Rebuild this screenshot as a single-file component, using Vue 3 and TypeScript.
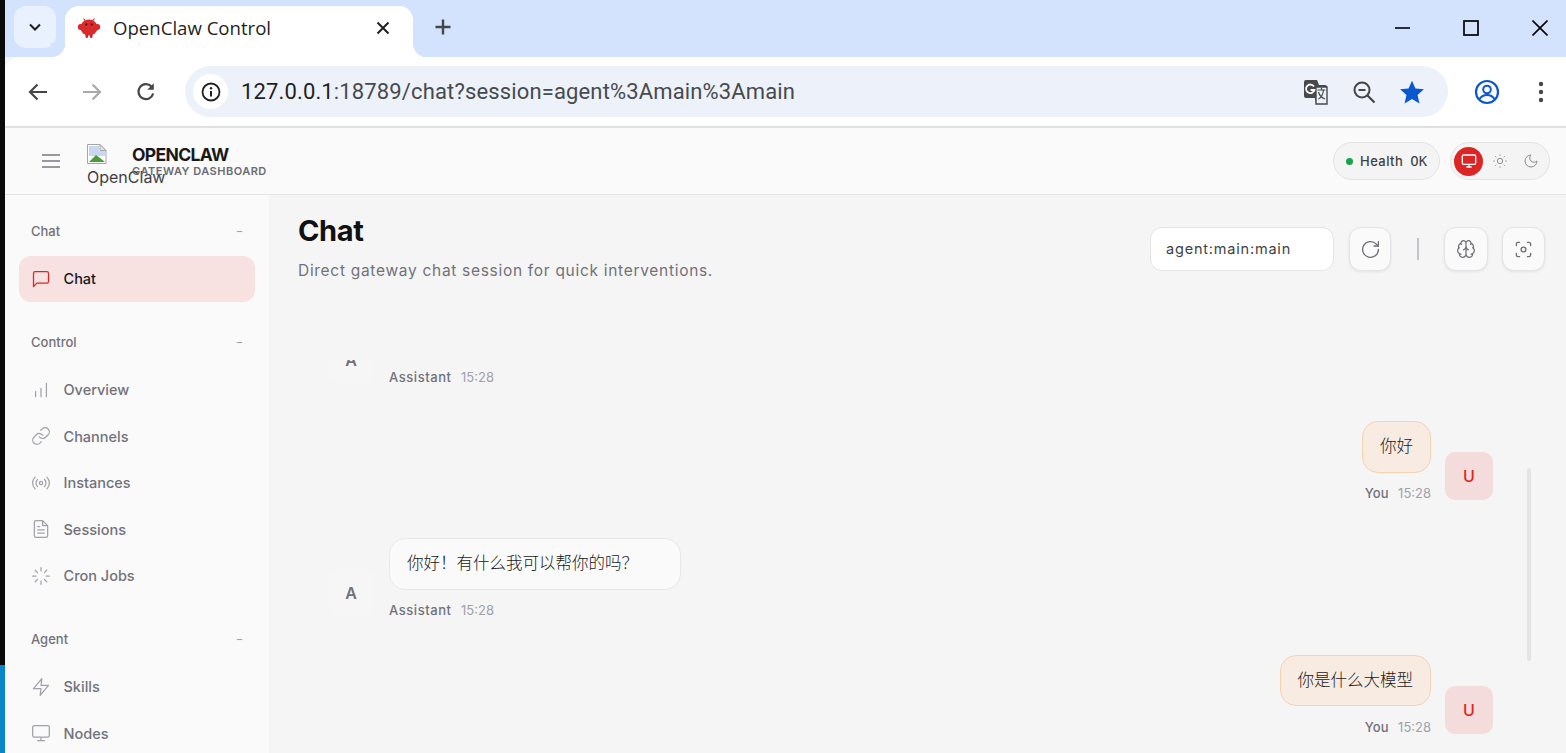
<script setup lang="ts">
interface NavItem { label: string; icon: string; active?: boolean }
interface NavGroup { title: string; items: NavItem[] }
const groups: NavGroup[] = [
  { title: 'Chat', items: [{ label: 'Chat', icon: 'chat', active: true }] },
  { title: 'Control', items: [
    { label: 'Overview', icon: 'bars' },
    { label: 'Channels', icon: 'link' },
    { label: 'Instances', icon: 'radio' },
    { label: 'Sessions', icon: 'file' },
    { label: 'Cron Jobs', icon: 'loader' },
  ] },
  { title: 'Agent', items: [
    { label: 'Skills', icon: 'zap' },
    { label: 'Nodes', icon: 'monitor' },
  ] },
]
const icons: Record<string, string> = {
  chat: 'M21 15a2 2 0 0 1-2 2H7l-4 4V5a2 2 0 0 1 2-2h14a2 2 0 0 1 2 2z',
  bars: 'M5.500 20v-6M12 20v-10M18.500 20V4',
  link: 'M10 13a5 5 0 0 0 7.54.54l3-3a5 5 0 0 0-7.07-7.07l-1.72 1.71M14 11a5 5 0 0 0-7.54-.54l-3 3a5 5 0 0 0 7.07 7.07l1.71-1.71',
  radio: 'M4.9 19.1C1 15.2 1 8.8 4.9 4.9M7.8 16.2c-2.3-2.3-2.3-6.1 0-8.5M16.2 7.8c2.3 2.3 2.3 6.1 0 8.5M19.1 4.9C23 8.8 23 15.1 19.1 19M14 12a2 2 0 1 1-4 0 2 2 0 0 1 4 0z',
  file: 'M14 2H6a2 2 0 0 0-2 2v16a2 2 0 0 0 2 2h12a2 2 0 0 0 2-2V8zM14 2v6h6M16 13H8M16 17H8M10 9H8',
  loader: 'M12 2v4M12 18v4M4.93 4.93l2.83 2.83M16.24 16.24l2.83 2.83M2 12h4M18 12h4M4.93 19.07l2.83-2.83M16.24 7.76l2.83-2.83',
  zap: 'M13 2 3 14h9l-1 8 10-12h-9z',
  monitor: 'M4 3h16a2 2 0 0 1 2 2v10a2 2 0 0 1-2 2H4a2 2 0 0 1-2-2V5a2 2 0 0 1 2-2zM8 21h8M12 17v4',
}
const brain: string = 'M12 5a3 3 0 1 0-5.997.125 4 4 0 0 0-2.526 5.77 4 4 0 0 0 .556 6.588A4 4 0 1 0 12 18ZM12 5a3 3 0 1 1 5.997.125 4 4 0 0 1 2.526 5.77 4 4 0 0 1-.556 6.588A4 4 0 1 1 12 18ZM15 13a4.500 4.500 0 0 1-3-4 4.500 4.500 0 0 1-3 4M17.599 6.500a3 3 0 0 0 .399-1.375M6.003 5.125A3 3 0 0 0 6.401 6.500M3.477 10.896a4 4 0 0 1 .585-.396M19.938 10.500a4 4 0 0 1 .585.396M6 18a4 4 0 0 1-1.967-.516M19.967 17.484A4 4 0 0 1 18 18'
interface Msg { who: 'a' | 'u'; text: string }
const messages: Msg[] = [
  { who: 'a', text: '' },
  { who: 'u', text: '你好' },
  { who: 'a', text: '你好！有什么我可以帮你的吗？' },
  { who: 'u', text: '你是什么大模型' },
]
</script>

<template>
  <div class="screen">
    <div class="edge"></div>
    <div class="window">
      <div class="tabstrip">
        <button class="tabsearch">
          <svg width="16" height="16" viewBox="0 0 16 16"><path d="M3 5.500 8 10.500 13 5.500" fill="none" stroke="#1f1f1f" stroke-width="2"/></svg>
        </button>
        <div class="tab">
          <svg class="favicon" width="24" height="24" viewBox="0 0 24 24">
            <path d="M6.500 2.500l2 2.500M17.500 2.500l-2 2.500" stroke="#d32f2f" stroke-width="1.200"/>
            <ellipse cx="12" cy="11.500" rx="8.500" ry="8" fill="#d92b2b"/>
            <ellipse cx="3.600" cy="11" rx="2.800" ry="3" fill="#d92b2b"/>
            <ellipse cx="20.400" cy="11" rx="2.800" ry="3" fill="#d92b2b"/>
            <rect x="8.500" y="18" width="2.600" height="4" rx="1.300" fill="#c62828"/>
            <rect x="12.900" y="18" width="2.600" height="4" rx="1.300" fill="#c62828"/>
            <circle cx="9.300" cy="8.500" r="1" fill="#3a0a0a"/><circle cx="14.700" cy="8.500" r="1" fill="#3a0a0a"/>
          </svg>
          <span class="tabtitle">OpenClaw Control</span>
          <svg class="tabclose" width="14" height="14" viewBox="0 0 14 14"><path d="M1.500 1.500l11 11M12.500 1.500l-11 11" stroke="#1f1f1f" stroke-width="2"/></svg>
        </div>
        <svg class="newtab" width="18" height="18" viewBox="0 0 18 18"><path d="M9 1.500v15M1.500 9h15" stroke="#444746" stroke-width="2.400"/></svg>
        <div class="winctl">
          <svg width="16" height="16" viewBox="0 0 16 16"><path d="M1 8h15" stroke="#000" stroke-width="1.600"/></svg>
          <svg width="16" height="16" viewBox="0 0 16 16"><rect x="1" y="1" width="14" height="14" fill="none" stroke="#000" stroke-width="1.700"/></svg>
          <svg width="16" height="16" viewBox="0 0 16 16"><path d="M.5.500l15 15M15.500.500l-15 15" stroke="#000" stroke-width="1.600"/></svg>
        </div>
      </div>

      <div class="toolbar">
        <svg class="navbtn" width="22" height="22" viewBox="0 0 22 22"><path d="M20 11H3M10.500 3.500 3 11l7.500 7.500" fill="none" stroke="#444746" stroke-width="2.200"/></svg>
        <svg class="navbtn" width="22" height="22" viewBox="0 0 22 22"><path d="M2 11h17M11.500 3.500 19 11l-7.500 7.500" fill="none" stroke="#a9a9a9" stroke-width="2.200"/></svg>
        <svg class="navbtn" width="22" height="22" viewBox="0 0 22 22"><path d="M18.200 12.500A7.500 7.500 0 1 1 16.500 5.500" fill="none" stroke="#444746" stroke-width="2.200"/><path d="M18.800 2.200v6.500h-6.500z" fill="#444746"/></svg>
        <div class="omnibox">
          <span class="siteinfo">
            <svg width="20" height="20" viewBox="0 0 20 20"><circle cx="10" cy="10" r="8.500" fill="none" stroke="#1f1f1f" stroke-width="1.800"/><path d="M10 9v5.500" stroke="#1f1f1f" stroke-width="2"/><circle cx="10" cy="6.200" r="1.200" fill="#1f1f1f"/></svg>
          </span>
          <span class="url"><span class="host">127.0.0.1</span>:18789/chat?session=agent%3Amain%3Amain</span>
          <span class="omni-actions">
            <svg width="26" height="26" viewBox="0 0 26 26"><path d="M3 1h11l2 5H22a2 2 0 0 1 2 2v15a2 2 0 0 1-2 2h-9l-1-6H3a2 2 0 0 1-2-2V3a2 2 0 0 1 2-2z" fill="#47494a"/><path d="M13 8h11v17H13z" fill="#edf2fa" stroke="#47494a" stroke-width="1.400"/><path d="M14.500 11h8M18.500 9v2M15.500 20c3-1.500 4.500-4.500 5-9M15.500 13c1 3.500 3.500 6 6.500 7" fill="none" stroke="#47494a" stroke-width="1.200"/><path d="M11 7.500a4.300 4.300 0 1 0 .5 3.500H7.500" fill="none" stroke="#fff" stroke-width="1.800"/></svg>
            <svg width="24" height="24" viewBox="0 0 24 24"><circle cx="10" cy="10" r="7.500" fill="none" stroke="#444746" stroke-width="2"/><path d="M6.500 10h7M15.500 15.500l7 7" stroke="#444746" stroke-width="2.200"/></svg>
            <svg width="26" height="26" viewBox="0 0 24 24"><path d="M12 1.500l3.200 7.300 7.800.7-5.900 5.200 1.800 7.800L12 18.400l-6.900 4.100 1.800-7.800L1 9.500l7.800-.7z" fill="#0b57d0"/></svg>
          </span>
        </div>
        <svg class="profile" width="26" height="26" viewBox="0 0 26 26"><circle cx="13" cy="13" r="11" fill="none" stroke="#0b57d0" stroke-width="2.200"/><circle cx="13" cy="10.500" r="3.800" fill="none" stroke="#0b57d0" stroke-width="2"/><path d="M5.500 20c2-3 4.500-4 7.500-4s5.500 1 7.500 4" fill="none" stroke="#0b57d0" stroke-width="2"/></svg>
        <svg class="kebab" width="6" height="24" viewBox="0 0 6 24"><circle cx="3" cy="4" r="2.200" fill="#444746"/><circle cx="3" cy="12" r="2.200" fill="#444746"/><circle cx="3" cy="20" r="2.200" fill="#444746"/></svg>
      </div>

      <header class="topbar">
        <svg class="menu" width="18" height="14" viewBox="0 0 18 14"><path d="M0 1h18M0 7h18M0 13h18" stroke="#777a80" stroke-width="1.600"/></svg>
        <div class="logo">
          <svg width="20" height="20" viewBox="0 0 20 20"><path d="M.5.500H13l6 6v13H.5z" fill="#fff" stroke="#a6a6a6"/><path d="M2 2h10v5h6v5H2z" fill="#c8d8f0"/><path d="M2 18l7-7 4 3 5 4z" fill="#4c9a3c"/><path d="M13 .5v6h6z" fill="#e4e4e4" stroke="#a6a6a6"/></svg>
          <span class="alt">OpenClaw</span>
        </div>
        <div class="brand">
          <div class="brand-name">OPENCLAW</div>
          <div class="brand-sub">GATEWAY DASHBOARD</div>
        </div>
        <div class="top-right">
          <div class="health"><i class="dot"></i><span>Health</span><span class="ok">OK</span></div>
          <div class="theme">
            <span class="theme-on"><svg width="16" height="16" viewBox="0 0 24 24" fill="none" stroke="#fff" stroke-width="2"><path :d="icons.monitor"/></svg></span>
            <svg class="theme-ic" width="16" height="16" viewBox="0 0 24 24" fill="none" stroke="#8b8b90" stroke-width="1.500"><circle cx="12" cy="12" r="4"/><path d="M12 2v2M12 20v2M4.900 4.900l1.400 1.400M17.700 17.700l1.400 1.400M2 12h2M20 12h2M6.300 17.700l-1.400 1.400M19.100 4.900l-1.400 1.400"/></svg>
            <svg class="theme-ic" width="16" height="16" viewBox="0 0 24 24" fill="none" stroke="#8b8b90" stroke-width="1.500"><path d="M12 3a6 6 0 0 0 9 9 9 9 0 1 1-9-9z"/></svg>
          </div>
        </div>
      </header>

      <div class="body">
        <aside class="sidebar">
          <section v-for="g in groups" :key="g.title" class="navgroup">
            <div class="navlabel"><span>{{ g.title }}</span><span class="collapse">−</span></div>
            <a v-for="it in g.items" :key="it.label" class="navitem" :class="{ active: it.active }">
              <svg width="20" height="20" viewBox="0 0 24 24" fill="none" stroke="currentColor" stroke-width="1.500" stroke-linecap="round" stroke-linejoin="round"><path :d="icons[it.icon]"/></svg>
              <span>{{ it.label }}</span>
            </a>
          </section>
        </aside>

        <main class="content">
          <div class="pagehead">
            <div>
              <h1>Chat</h1>
              <p>Direct gateway chat session for quick interventions.</p>
            </div>
            <div class="controls">
              <div class="session">agent:main:main</div>
              <button class="iconbtn refresh">
                <svg width="21" height="21" viewBox="0 0 24 24" fill="none" stroke="#6f6f76" stroke-width="1.500" stroke-linecap="round" stroke-linejoin="round"><path d="M21 12a9 9 0 1 1-2.600-6.400L21 8"/><path d="M21 3v5h-5"/></svg>
              </button>
              <span class="sep"></span>
              <button class="iconbtn">
                <svg width="20" height="20" viewBox="0 0 24 24" fill="none" stroke="#6f6f76" stroke-width="1.500" stroke-linecap="round" stroke-linejoin="round"><path :d="brain"/></svg>
              </button>
              <button class="iconbtn narrow">
                <svg width="19" height="19" viewBox="0 0 24 24" fill="none" stroke="#6f6f76" stroke-width="1.700" stroke-linecap="round" stroke-linejoin="round"><path d="M3 7V5a2 2 0 0 1 2-2h2M17 3h2a2 2 0 0 1 2 2v2M21 17v2a2 2 0 0 1-2 2h-2M7 21H5a2 2 0 0 1-2-2v-2"/><circle cx="12" cy="12" r="3"/></svg>
              </button>
            </div>
          </div>

          <div class="thread">
            <div class="thread-inner">
              <div v-for="(m, i) in messages" :key="i" class="group" :class="m.who === 'u' ? 'user' : 'assistant'">
                <div v-if="m.who === 'a'" class="avatar a">A</div>
                <div class="stack">
                  <div v-if="m.text" class="bubble">{{ m.text }}</div>
                  <div class="meta"><b>{{ m.who === 'u' ? 'You' : 'Assistant' }}</b><span>15:28</span></div>
                </div>
                <div v-if="m.who === 'u'" class="avatar u">U</div>
              </div>
            </div>
            <div class="scrollbar"></div>
          </div>
        </main>
      </div>
    </div>
  </div>
</template>

<style>
html, body { margin: 0; padding: 0; overflow: hidden; background: #f5f5f5; }
</style>

<style scoped>
.screen { display: flex; width: 1566px; height: 753px; overflow: hidden; font-family: "Inter", "Noto Sans CJK SC", sans-serif; }
.edge { width: 5px; flex: none; background: linear-gradient(#0a0a0a 0, #0a0a0a 665px, #0a86c8 665px); }
.window { flex: 1; min-width: 0; display: flex; flex-direction: column; }
button { border: 0; padding: 0; font: inherit; }

.tabstrip { height: 57px; flex: none; background: #d3e3fd; display: flex; align-items: flex-start; position: relative; }
.tabsearch { width: 42px; height: 42px; margin: 6px 0 0 9px; border-radius: 12px; background: #e9f1fe; display: flex; align-items: center; justify-content: center; }
.tab { position: relative; margin: 6px 0 0 9px; width: 348px; height: 51px; background: #fff; border-radius: 14px 14px 0 0; display: flex; align-items: center; padding: 0 23px 8px 12px; box-sizing: border-box; }
.tab::before, .tab::after { content: ""; position: absolute; bottom: 0; width: 14px; height: 14px; }
.tab::before { left: -14px; background: radial-gradient(circle at 0 0, #d3e3fd 14px, #fff 14.500px); }
.tab::after { right: -14px; background: radial-gradient(circle at 100% 0, #d3e3fd 14px, #fff 14.500px); }
.favicon { flex: none; }
.tabtitle { margin-left: 12px; flex: 1; font: 18.600px "Open Sans", sans-serif; color: #1f1f1f; }
.newtab { margin: 18px 0 0 21px; }
.winctl { margin-left: auto; margin-top: 20px; margin-right: 18px; display: flex; gap: 53px; }

.toolbar { height: 69px; flex: none; background: #fff; border-radius: 14px 0 0 0; box-sizing: border-box; display: flex; align-items: center; padding: 0 14px 0 22px; }
.navbtn { margin-right: 32px; flex: none; }
.navbtn:nth-child(3) { margin-right: 28px; }
.omnibox { width: 1263px; height: 51px; flex: none; background: #edf2fa; border-radius: 26px; display: flex; align-items: center; box-sizing: border-box; padding: 0 23px 0 8px; }
.siteinfo { width: 35px; height: 35px; background: #fff; border-radius: 50%; display: flex; align-items: center; justify-content: center; flex: none; }
.url { margin-left: 13px; font: 22px "Roboto", sans-serif; color: #474a4d; letter-spacing: .14px; white-space: nowrap; }
.host { color: #1f1f1f; }
.omni-actions { margin-left: auto; display: flex; align-items: center; gap: 23px; }
.profile { margin-left: 26px; flex: none; }
.kebab { margin-left: 38px; flex: none; }

.topbar { height: 69px; flex: none; box-sizing: border-box; background: #fafafa; border-top: 2px solid #e0e0e0; border-bottom: 1px solid #e4e4e7; display: flex; align-items: center; padding: 0 16px 0 37px; }
.menu { flex: none; }
.logo { width: 45px; flex: none; margin-left: 27px; align-self: flex-start; margin-top: 16px; color: #3f3f46; font-size: 16px; line-height: 20px; }
.logo svg { display: block; }
.alt { white-space: nowrap; display: block; margin-top: 3px; }
.brand { align-self: flex-start; margin-top: 17px; }
.brand-name { font: 700 17.500px/19px "Inter", sans-serif; color: #18181b; letter-spacing: -.65px; }
.brand-sub { font: 600 11px/14px "Inter", sans-serif; color: #6b6b75; letter-spacing: .5px; white-space: nowrap; }
.top-right { margin-left: auto; display: flex; align-items: center; gap: 10px; }
.health { height: 38px; width: 107px; box-sizing: border-box; border: 1px solid #e4e4e7; border-radius: 19px; background: #f4f4f5; display: flex; align-items: center; padding-left: 12px; font-size: 13px; font-weight: 500; color: #3f3f46; letter-spacing: .45px; }
.dot { width: 7px; height: 7px; border-radius: 50%; background: #16a34a; margin-right: 7px; }
.ok { font-family: "DejaVu Sans Mono", monospace; margin-left: 7px; font-size: 14px; letter-spacing: 0; }
.theme { height: 38px; width: 100px; box-sizing: border-box; border: 1px solid #e4e4e7; border-radius: 19px; background: #f4f4f5; display: flex; align-items: center; padding-left: 3px; }
.theme-on { width: 29px; height: 29px; border-radius: 50%; background: #dc2626; display: flex; align-items: center; justify-content: center; flex: none; }
.theme-ic { margin-left: 15px; flex: none; }
.theme-on + .theme-ic { margin-left: 9px; }

.body { flex: 1; min-height: 0; display: flex; }
.sidebar { width: 264px; flex: none; background: #fafafa; box-sizing: border-box; padding: 26px 14px 0; overflow: hidden; }
.navgroup { margin-bottom: 30px; }
.navlabel { display: flex; justify-content: space-between; padding: 0 12px; font-size: 13px; font-weight: 500; line-height: 20px; color: #71717a; margin-bottom: 15px; }
.collapse { color: #a1a1aa; font-size: 11px; }
.navitem { height: 46px; box-sizing: border-box; margin-bottom: .5px; border-radius: 12px; display: flex; align-items: center; gap: 12.500px; padding: 0 0 1px 12px; font-size: 14.500px; font-weight: 500; color: #71717a; }
.navitem svg { color: #a1a1aa; flex: none; }
.navitem.active { background: #f7e1e1; color: #18181b; }
.navitem.active svg { color: #e02424; }

.content { flex: 1; min-width: 0; background: #f5f5f5; display: flex; flex-direction: column; }
.pagehead { display: flex; justify-content: space-between; padding: 19px 21px 0 29px; height: 165px; box-sizing: border-box; flex: none; }
h1 { margin: 0; font-size: 29px; line-height: 34px; font-weight: 700; color: #111113; letter-spacing: -.4px; }
.pagehead p { margin: 13px 0 0; font-size: 15.500px; line-height: 20px; color: #71717a; letter-spacing: .7px; }
.controls { display: flex; align-items: center; height: 44px; margin-top: 13px; }
.session { width: 184px; height: 44px; box-sizing: border-box; background: #fff; border: 1px solid #e4e4e7; border-radius: 12px; display: flex; align-items: center; padding: 0 0 1px 15px; font-size: 14.500px; color: #3f3f46; letter-spacing: .8px; }
.iconbtn { width: 44px; height: 44px; margin-left: 14px; border-radius: 12px; border: 1px solid #e4e4e7; background: #fafafa; box-shadow: 0 1px 3px rgba(0,0,0,.08); display: flex; align-items: center; justify-content: center; box-sizing: border-box; }
.iconbtn.refresh { width: 42px; margin-left: 15px; }
.iconbtn.narrow { width: 43px; }
.sep { width: 2px; height: 22px; background: #c4c4cc; margin: 0 0 0 26px; }
.sep + .iconbtn { margin-left: 25px; }

.thread { flex: 1; min-height: 0; position: relative; overflow: hidden; }
.thread-inner { margin-top: -55.500px; padding: 0 73px 0 58px; display: flex; flex-direction: column; gap: 35.300px; }
.group { display: flex; align-items: flex-end; gap: 14px; min-height: 81.500px; }
.group.user { justify-content: flex-end; }
.stack { display: flex; flex-direction: column; }
.group.user .stack { align-items: flex-end; }
.avatar { width: 48px; height: 48px; margin-bottom: 2.500px; border-radius: 10px; display: flex; align-items: center; justify-content: center; font-size: 16px; font-weight: 600; flex: none; }
.avatar.a { background: #f6f6f6; color: #71717a; }
.avatar.u { background: #f4dcdc; color: #e02424; font-weight: 500; }
.bubble { box-sizing: border-box; height: 51.500px; display: flex; align-items: center; padding: 0 17px 4px; border-radius: 16px; font-size: 16.500px; color: #18181b; border: 1px solid #e8e8ea; background: #fafafa; font-family: "Noto Sans CJK SC", sans-serif; font-weight: 300; }
.assistant .bubble { padding-right: 42px; }
.user .bubble { background: #f8ebe1; border-color: #f6d2b5; }
.meta { display: flex; gap: 9.500px; align-items: center; font-size: 13px; line-height: 20px; margin-top: 11px; height: 19px; color: #a1a1aa; }
.meta b { font-weight: 500; color: #71717a; letter-spacing: .55px; }
.user .meta b { letter-spacing: .1px; }
.scrollbar { position: absolute; top: 108px; right: 35px; width: 4px; height: 193px; background: #e4e4e7; border-radius: 2px; }
</style>
